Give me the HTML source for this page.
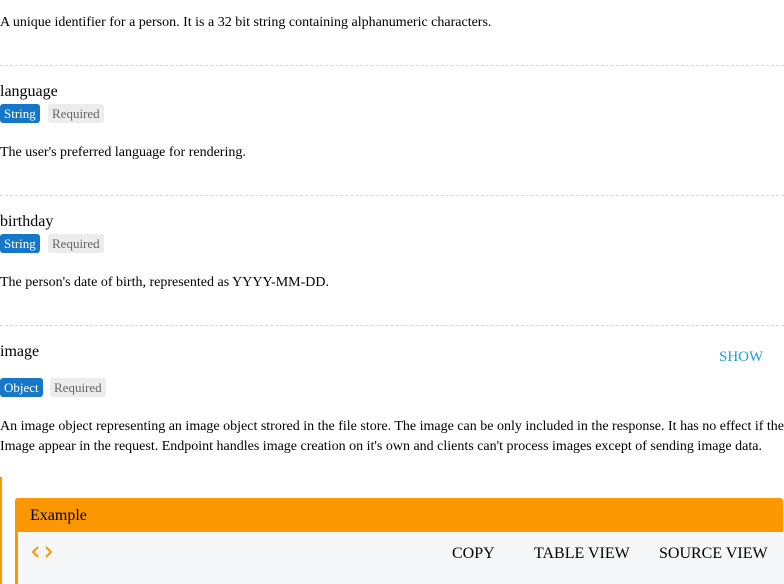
<html><head><style>
body{margin:0;width:784px;height:584px;overflow:hidden;background:#fff;font-family:"Liberation Serif",serif;color:#000;position:relative}
.a{position:absolute;white-space:nowrap}
.t{font-size:14px}
.h{font-size:16px}
.hr{position:absolute;left:0;width:784px;border-top:1px dashed #d8d8d8;height:0}
.b{position:absolute;font-size:13px;line-height:19px;height:19px;padding:0 4px;border-radius:3px}
.s{background:#1677c8;color:#fff}
.r{background:#ececec;color:#666}
</style></head><body>
<div class="a t" style="left:0;top:15px">A unique identifier for a person. It is a 32 bit string containing alphanumeric characters.</div>
<div class="hr" style="top:65px"></div>
<div class="a h" style="left:0;top:83px">language</div>
<div class="b s" style="left:0;top:104px">String</div>
<div class="b r" style="left:48px;top:104px">Required</div>
<div class="a t" style="left:0;top:145px">The user's preferred language for rendering.</div>
<div class="hr" style="top:195px"></div>
<div class="a h" style="left:0;top:213px">birthday</div>
<div class="b s" style="left:0;top:234px">String</div>
<div class="b r" style="left:48px;top:234px">Required</div>
<div class="a t" style="left:0;top:275px">The person's date of birth, represented as YYYY-MM-DD.</div>
<div class="hr" style="top:325px"></div>
<div class="a h" style="left:0;top:343px">image</div>
<div class="a" style="left:719px;top:349px;font-size:15px;color:#1a9fd9">SHOW</div>
<div class="b s" style="left:0;top:378px">Object</div>
<div class="b r" style="left:50px;top:378px">Required</div>
<div class="a t" style="left:0;top:419px">An image object representing an image object strored in the file store. The image can be only included in the response. It has no effect if the</div>
<div class="a t" style="left:0;top:439px">Image appear in the request. Endpoint handles image creation on it's own and clients can't process images except of sending image data.</div>
<div style="position:absolute;left:0;top:477px;width:2px;height:107px;background:#fb9700"></div>
<div style="position:absolute;left:15px;top:498px;width:767px;height:86px;background:#f5f6f8;border-left:3px solid #fb9700;border-radius:3px 3px 0 0"></div>
<div style="position:absolute;left:15px;top:498px;width:768px;height:34px;background:#fb9700;border-radius:3px 3px 0 0"></div>
<div class="a" style="left:30px;top:507px;font-size:16px">Example</div>
<svg class="a" style="left:31px;top:545px" width="22" height="14" viewBox="0 0 22 14"><path d="M7 2L2 7l5 5M15 2l5 5-5 5" fill="none" stroke="#fb9700" stroke-width="2"/></svg>
<div class="a" style="left:452px;top:545px;font-size:16px">COPY</div>
<div class="a" style="left:534px;top:545px;font-size:16px">TABLE VIEW</div>
<div class="a" style="left:659px;top:545px;font-size:16px">SOURCE VIEW</div>
</body></html>
